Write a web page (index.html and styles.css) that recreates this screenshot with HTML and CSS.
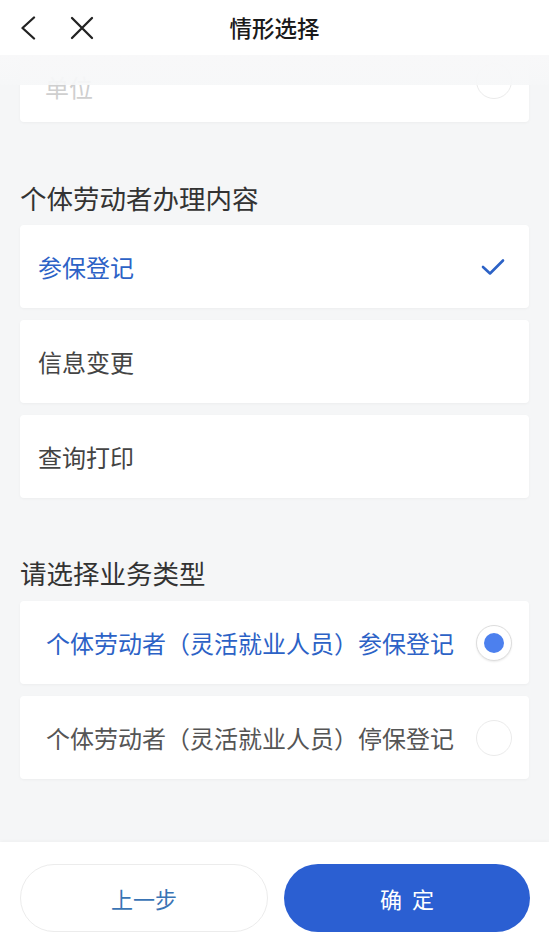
FILE: index.html
```html
<!DOCTYPE html>
<html lang="zh-CN">
<head>
  <meta charset="UTF-8" />
  <meta name="viewport" content="width=device-width, initial-scale=1.0" />
  <title>情形选择</title>
  <link rel="stylesheet" href="styles.css">
</head>
<body>
  <header class="topbar">
    <div class="nav">
      <button class="nav-btn" aria-label="返回">
        <svg width="20" height="24" viewBox="0 0 20 24"><path d="M16 1.5 L4.5 12 L16 22.5" fill="none" stroke="#222" stroke-width="2.3" stroke-linecap="round" stroke-linejoin="round"/></svg>
      </button>
      <button class="nav-btn" aria-label="关闭">
        <svg width="24" height="24" viewBox="0 0 24 24"><path d="M2 2 L22 22 M22 2 L2 22" fill="none" stroke="#222" stroke-width="2.3" stroke-linecap="round"/></svg>
      </button>
      <h1 class="title">情形选择</h1>
    </div>
    <div class="fade"></div>
  </header>

  <main>
    <div class="card faded">
      <span class="opt-text">单位</span>
      <span class="radio"></span>
    </div>

    <h2 class="section-title">个体劳动者办理内容</h2>
    <div class="list">
      <div class="card item active">
        <span>参保登记</span>
        <svg class="check" width="24" height="18" viewBox="0 0 24 18"><path d="M2 9 L9 15.5 L22 2.5" fill="none" stroke="#2c62c6" stroke-width="2.6" stroke-linecap="round" stroke-linejoin="round"/></svg>
      </div>
      <div class="card item"><span>信息变更</span></div>
      <div class="card item"><span>查询打印</span></div>
    </div>

    <h2 class="section-title second">请选择业务类型</h2>
    <div class="list">
      <div class="card option active">
        <span class="opt-text">个体劳动者（灵活就业人员）参保登记</span>
        <span class="radio checked"></span>
      </div>
      <div class="card option">
        <span class="opt-text">个体劳动者（灵活就业人员）停保登记</span>
        <span class="radio"></span>
      </div>
    </div>
  </main>

  <footer class="actions">
    <button class="btn btn-prev">上一步</button>
    <button class="btn btn-ok">确&nbsp;&nbsp;定</button>
  </footer>
</body>
</html>
```

FILE: styles.css
```css
* {
  box-sizing: border-box;
}
body {
  margin: 0;
  height: 951px;
  display: flex;
  flex-direction: column;
  background: #f5f6f7;
  color: #333;
  font-family: "Noto Sans CJK SC", "Noto Sans", sans-serif;
  overflow: hidden;
}
.topbar {
  position: absolute;
  top: 0;
  left: 0;
  right: 0;
  z-index: 2;
}
.nav {
  height: 55px;
  background: #fff;
  display: flex;
  align-items: center;
  padding-left: 13px;
  gap: 24px;
  position: relative;
}
.nav-btn {
  background: none;
  border: none;
  padding: 0;
  width: 30px;
  height: 30px;
  display: flex;
  align-items: center;
  justify-content: center;
}
.title {
  position: absolute;
  left: 0;
  right: 0;
  top: 0;
  margin: 0;
  line-height: 55px;
  text-align: center;
  font-size: 22.5px;
  font-weight: 500;
  color: #1a1a1a;
  pointer-events: none;
}
.fade {
  height: 30px;
  background: linear-gradient(#f8f8f9, rgba(246, 247, 248, 0.92));
}
main {
  flex: 1;
  padding: 40px 20px 0;
}
.card {
  background: #fff;
  border-radius: 4px;
  box-shadow: 0 1px 3px rgba(0, 0, 0, 0.04);
  height: 83px;
  display: flex;
  align-items: center;
  justify-content: space-between;
}
.card.faded {
  height: 82px;
  padding: 0 17px 0 25px;
}
.card.faded .opt-text {
  color: #cfcfcf;
  font-size: 24px;
  padding-top: 10px;
}
.section-title {
  margin: 58px 0 9px;
  font-size: 26.5px;
  line-height: 36px;
  font-weight: 400;
  color: #333;
}
.section-title.second {
  margin: 57px 0 10px;
}
.list {
  display: flex;
  flex-direction: column;
  gap: 12px;
}
.item {
  padding: 0 24px 0 18px;
  font-size: 24px;
  color: #444;
}
.item.active {
  color: #2c62c6;
}
.option {
  padding: 0 17px 0 26px;
  font-size: 24px;
  color: #555;
}
.option.active {
  color: #2c62c6;
}
.radio {
  width: 36px;
  height: 36px;
  border-radius: 50%;
  border: 1px solid #ebebeb;
  display: flex;
  align-items: center;
  justify-content: center;
  background: #fff;
}
.radio.checked {
  border-color: #ddd;
  box-shadow: 0 1px 2px rgba(0, 0, 0, 0.08);
}
.radio.checked::after {
  content: "";
  width: 20px;
  height: 20px;
  border-radius: 50%;
  background: #4c80ee;
}
.actions {
  height: 109px;
  background: #fff;
  box-shadow: 0 -1px 4px rgba(0, 0, 0, 0.03);
  display: flex;
  gap: 16px;
  padding: 22px 19px 0 20px;
}
.btn {
  flex: 1;
  height: 68px;
  border-radius: 34px;
  font-family: inherit;
  font-size: 22px;
}
.btn-prev {
  background: #fff;
  border: 1px solid #ececec;
  color: #3a74b4;
}
.btn-ok {
  background: #2b5fd2;
  border: none;
  color: #fff;
}
```
